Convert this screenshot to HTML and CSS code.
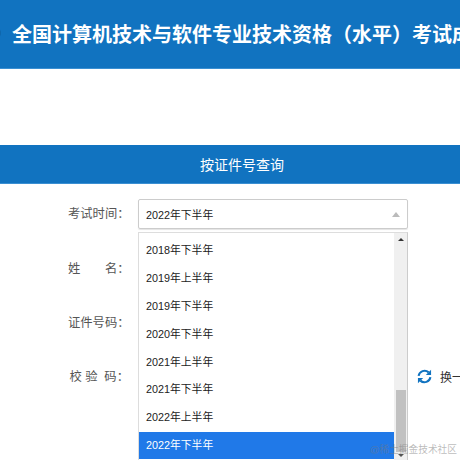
FILE: index.html
```html
<!DOCTYPE html>
<html lang="zh-CN">
<head>
<meta charset="utf-8">
<title>成绩查询</title>
<link rel="stylesheet" href="styles.css">
</head>
<body>
<header class="top"><i class="top-logo"></i><h1 class="top-title">全国计算机技术与软件专业技术资格（水平）考试成绩查询</h1></header>
<main class="panel">
  <h2 class="panel-title">按证件号查询</h2>
  <form class="form">
    <div class="row">
      <span class="label">考试时间：</span>
      <div class="select-wrap">
        <div class="select"><span>2022年下半年</span><i class="caret"></i></div>
        <div class="menu">
          <ul class="options">
            <li>2018年下半年</li>
            <li>2019年上半年</li>
            <li>2019年下半年</li>
            <li>2020年下半年</li>
            <li>2021年上半年</li>
            <li>2021年下半年</li>
            <li>2022年上半年</li>
            <li class="active">2022年下半年</li>
          </ul>
          <div class="scrollbar">
            <i class="arrow-up"></i>
            <div class="thumb"></div>
            <i class="arrow-down"></i>
          </div>
        </div>
      </div>
    </div>
    <div class="row"><span class="label">姓<b class="gap-l"></b>名：</span></div>
    <div class="row"><span class="label">证件号码：</span></div>
    <div class="row">
      <span class="label spaced">校 验&nbsp; 码：</span>
      <div class="refresh">
        <svg class="refresh-icon" viewBox="0 0 16 16" width="15" height="15" aria-hidden="true">
          <path d="M1.7 7.4A6.4 6.4 0 0 1 12.4 3.6" fill="none" stroke="#1173c0" stroke-width="2.2"/>
          <path d="M15 .8v5.6H9.4z" fill="#1173c0"/>
          <path d="M14.3 8.6A6.4 6.4 0 0 1 3.6 12.4" fill="none" stroke="#1173c0" stroke-width="2.2"/>
          <path d="M1 15.2V9.6h5.6z" fill="#1173c0"/>
        </svg>
        <span class="refresh-text">换一张</span>
      </div>
    </div>
  </form>
</main>
<div class="watermark">@稀土掘金技术社区</div>
</body>
</html>
```
FILE: styles.css
```css
* { box-sizing: border-box; }
html, body { margin: 0; padding: 0; width: 460px; height: 460px; overflow: hidden; background: #fff; }
body { position: relative; font-family: "Liberation Sans", "Noto Sans CJK SC", sans-serif; color: #333; }
.top { position: relative; height: 69px; background: #1173c0; border-bottom: 1px solid #3a8fd2; display: flex; align-items: center; padding: 2px 0 0 12px; overflow: hidden; }
.top-logo { position: absolute; left: -11px; top: 27px; width: 12px; height: 12px; border-radius: 50%; background: #0f66ab; }
.top-title { margin: 0; color: #fff; font-size: 20px; font-weight: 700; white-space: nowrap; line-height: 28px; }
.panel { margin-top: 76px; }
.panel-title { margin: 0; height: 39px; padding: 1px 0 0 24px; background: #1173c0; border-bottom: 1px solid #3a8fd2; color: #fff; font-size: 14px; font-weight: 400; line-height: 38px; text-align: center; }
.form { padding: 15px 0 0 68px; display: flex; flex-direction: column; gap: 24px; }
.row { display: flex; align-items: center; height: 30px; }
.label { flex: none; width: 70px; font-size: 12.3px; color: #555; white-space: nowrap; margin-top: -1px; }
.row:first-child .label { margin-top: -3px; }
.gap-l { display: inline-block; width: 24.7px; }
.spaced { padding-left: 1.5px; }
.select-wrap { position: relative; flex: none; width: 270px; height: 30px; }
.select { height: 30px; border: 1px solid #ccc; border-radius: 2px; box-shadow: 0 1px 1px #e4e4e4; display: flex; align-items: center; justify-content: space-between; padding: 0 7px; font-size: 10.8px; color: #222; }
.caret { width: 0; height: 0; border-left: 4.5px solid transparent; border-right: 4.5px solid transparent; border-bottom: 5px solid #bbb; }
.menu { position: absolute; left: 0; top: 33px; width: 270px; height: 240px; background: #fff; border: 1px solid #ddd; border-right: 1px solid #ccc; display: flex; z-index: 2; }
.options { list-style: none; margin: 0; padding: 4.4px 0 0; flex: 1; }
.options li { height: 27.8px; line-height: 27.8px; padding-left: 7px; font-size: 10.8px; color: #222; }
.options li.active { background: #2079e8; color: #fff; height: 27px; line-height: 27px; }
.scrollbar { width: 13px; flex: none; background: #f0f0f0; position: relative; }
.arrow-up { position: absolute; top: 5px; left: 3.5px; width: 0; height: 0; border-left: 3px solid transparent; border-right: 3px solid transparent; border-bottom: 3px solid #333; }
.thumb { position: absolute; top: 157px; left: 2px; width: 10px; height: 62px; background: #c1c1c1; }
.arrow-down { position: absolute; top: 221px; left: 3.5px; width: 0; height: 0; border-left: 3px solid transparent; border-right: 3px solid transparent; border-top: 3px solid #555; }
.refresh { margin-left: 279px; display: flex; align-items: center; gap: 8px; white-space: nowrap; font-size: 12px; color: #333; flex: none; }
.refresh-icon { flex: none; }
.watermark { position: absolute; right: 3px; bottom: 3px; font-size: 9.7px; color: rgba(120,120,120,.5); z-index: 3; white-space: nowrap; line-height: 14px; }
```
